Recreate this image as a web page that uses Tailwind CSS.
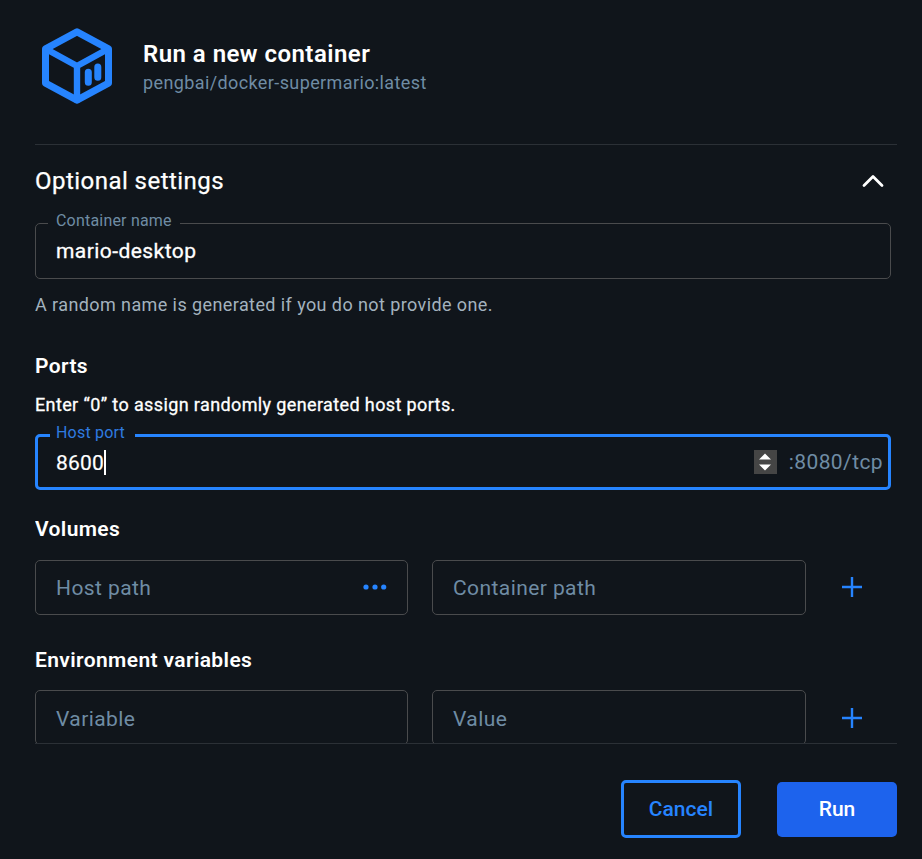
<!DOCTYPE html>
<html lang="en">
<head>
<meta charset="utf-8">
<title>Run a new container</title>
<script src="https://cdn.jsdelivr.net/npm/@tailwindcss/browser@4"></script>
</head>
<body class="bg-[#10151b]">
<main class="flex h-[859px] w-[922px] flex-col overflow-hidden bg-[#10151b] pr-[25px] pl-[35px] font-['Roboto',sans-serif] text-white">
  <header class="flex h-[145px] shrink-0 items-start border-b border-[#2b3036] pt-[28px] pl-[7px]">
    <svg class="h-[76px] w-[70px] shrink-0" viewBox="0 0 70 76" fill="none" stroke="#2684ff" stroke-width="7" stroke-linejoin="round" stroke-linecap="round">
      <path d="M35 3.8 66.5 20.8V55.2L35 72.2 3.5 55.2V20.8Z"/>
      <path d="M4 21 35 38 66 21M35 38V72" stroke-width="6.4"/>
      <path d="M46.3 44.3V54.2M55.8 39V49.2" stroke-width="7"/>
    </svg>
    <div class="pt-[11px] pl-[31px]">
      <h1 class="text-[24px] leading-[30px] font-semibold tracking-[0.46px]">Run a new container</h1>
      <p class="text-[18px] leading-[28px] tracking-[0.39px] text-[#6f8ca4]">pengbai/docker-supermario:latest</p>
    </div>
  </header>

  <section class="h-[598px] shrink-0 overflow-hidden">
    <div class="flex h-[72px] items-center justify-between pr-[13px]">
      <h2 class="text-[24px] leading-[36px] tracking-[0.46px] [-webkit-text-stroke:0.25px_white]">Optional settings</h2>
      <svg class="h-[14px] w-[22px]" viewBox="0 0 22 14" fill="none" stroke="#fff" stroke-width="2.8" stroke-linecap="round" stroke-linejoin="round"><path d="M2 11.5 11 2.5 20 11.5"/></svg>
    </div>
    <div class="relative mt-[6px] flex h-[56px] w-[856px] items-center rounded-[5px] border border-[#4a4b4d] px-[20px]">
      <span class="absolute -top-[13px] left-[12px] bg-[#10151b] px-[8px] text-[16px] leading-[20px] tracking-[0.2px] text-[#6f8ca4]">Container name</span>
      <span class="text-[21px] leading-[30px] tracking-[0.44px] [-webkit-text-stroke:0.3px_white]">mario-desktop</span>
    </div>
    <p class="mt-[12px] text-[18px] leading-[28px] tracking-[0.41px] text-[#a3b2be]">A random name is generated if you do not provide one.</p>

    <h3 class="mt-[32px] text-[21px] leading-[30px] font-semibold tracking-[0.38px]">Ports</h3>
    <p class="mt-[10px] text-[18px] leading-[28px] tracking-[0.38px] [-webkit-text-stroke:0.3px_white]">Enter “0” to assign randomly generated host ports.</p>
    <div class="relative mt-[15px] flex h-[56px] w-[856px] items-center rounded-[5px] border-3 border-[#2684ff] pr-[5px] pl-[18px]">
      <span class="absolute -top-[14px] left-[12px] bg-[#10151b] pr-[10px] pl-[6px] text-[16px] leading-[20px] tracking-[0.2px] text-[#2f7be0]">Host port</span>
      <span class="relative top-px text-[21px] leading-[30px] tracking-[0.2px] [-webkit-text-stroke:0.2px_white]">8600</span>
      <span class="h-[25px] w-[2px] bg-white"></span>
      <span class="ml-auto flex h-[24px] w-[23px] items-center justify-center bg-[#454545]">
        <svg class="h-[18px] w-[12px]" viewBox="0 0 12 18" fill="#fff"><path d="M6 0.5 12 6.5H0ZM0 11.5H12L6 17.5Z"/></svg>
      </span>
      <span class="ml-[12px] text-[21px] leading-[30px] tracking-[0.4px] text-[#6f8ca4]">:8080/tcp</span>
    </div>

    <h3 class="mt-[24px] text-[21px] leading-[30px] font-semibold tracking-[0.38px]">Volumes</h3>
    <div class="mt-[16px] flex items-center">
      <div class="flex h-[55px] w-[373px] items-center justify-between rounded-[5px] border border-[#4a4b4d] px-[20px]">
        <span class="text-[21px] leading-[30px] tracking-[0.42px] text-[#6f8ca4]">Host path</span>
        <svg class="mb-[1px] h-[6px] w-[24px]" viewBox="0 0 24 6" fill="#2684ff"><circle cx="3" cy="3" r="2.6"/><circle cx="12" cy="3" r="2.6"/><circle cx="20.7" cy="3" r="2.6"/></svg>
      </div>
      <div class="ml-[24px] flex h-[55px] w-[374px] items-center rounded-[5px] border border-[#4a4b4d] px-[20px]">
        <span class="text-[21px] leading-[30px] tracking-[0.42px] text-[#6f8ca4]">Container path</span>
      </div>
      <svg class="mb-[1px] ml-[36px] h-[20px] w-[20px]" viewBox="0 0 20 20" stroke="#2684ff" stroke-width="2.4"><path d="M0 10H20M10 0V20"/></svg>
    </div>

    <h3 class="mt-[30px] text-[21px] leading-[30px] font-semibold tracking-[0.38px]">Environment variables</h3>
    <div class="mt-[15px] flex items-center">
      <div class="flex h-[55px] w-[373px] items-center rounded-[5px] border border-[#4a4b4d] px-[20px] pt-[2px]">
        <span class="text-[21px] leading-[30px] tracking-[0.42px] text-[#6f8ca4]">Variable</span>
      </div>
      <div class="ml-[24px] flex h-[55px] w-[374px] items-center rounded-[5px] border border-[#4a4b4d] px-[20px] pt-[2px]">
        <span class="text-[21px] leading-[30px] tracking-[0.42px] text-[#6f8ca4]">Value</span>
      </div>
      <svg class="mt-[1px] ml-[36px] h-[20px] w-[20px]" viewBox="0 0 20 20" stroke="#2684ff" stroke-width="2.4"><path d="M0 10H20M10 0V20"/></svg>
    </div>
  </section>

  <footer class="flex h-[116px] shrink-0 items-start justify-end gap-[36px] border-t border-[#2b3036] pt-[36px]">
    <button class="h-[58px] w-[120px] rounded-[5px] border-3 border-[#2684ff] pt-[2px] text-[21px] font-medium text-[#2684ff]">Cancel</button>
    <button class="mt-[2px] h-[55px] w-[120px] rounded-[5px] bg-[#1d63ed] text-[21px] font-medium">Run</button>
  </footer>
</main>
</body>
</html>
